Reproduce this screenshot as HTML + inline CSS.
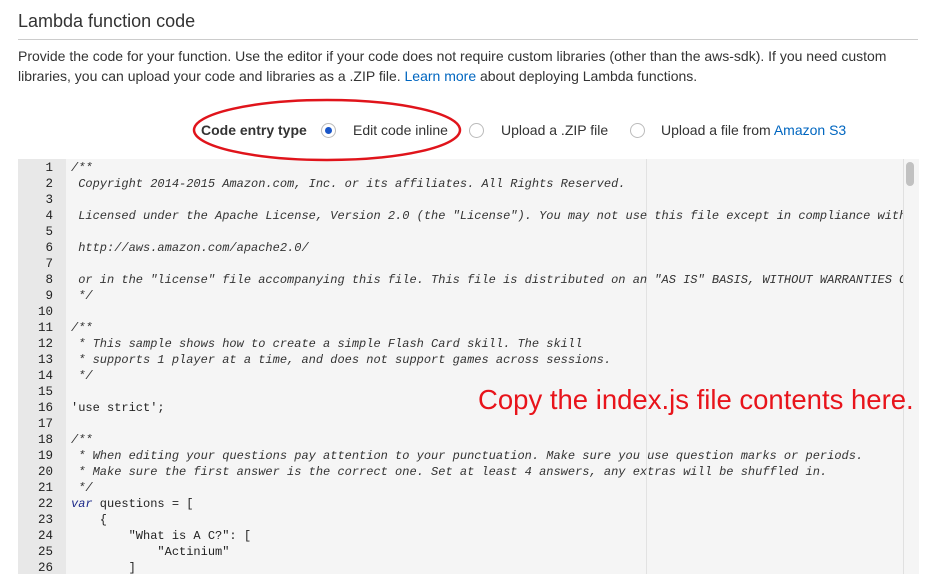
<!DOCTYPE html>
<html><head><style>
body{margin:0;width:937px;height:574px;overflow:hidden;background:#fff;font-family:"Liberation Sans",sans-serif;color:#333;position:relative}
.h{position:absolute;left:18px;top:11px;font-size:18px;color:#333}
.hr{position:absolute;left:18px;top:39px;width:900px;height:1px;background:#ccc}
.p{position:absolute;left:18px;top:47px;width:905px;font-size:14px;line-height:19.5px;color:#333}
a{color:#0066c0;text-decoration:none}
.row{position:absolute;top:122px;font-size:14px;white-space:nowrap}
.rad{position:absolute;top:123px;width:15px;height:15px;border:1px solid #bbb;border-radius:50%;box-sizing:border-box;background:#fff}
.rad.on::after{content:"";position:absolute;left:3px;top:3px;width:7px;height:7px;border-radius:50%;background:#1a56c8}
.ed{position:absolute;left:18px;top:159px;width:885px;height:415px;background:#f5f5f5;overflow:hidden}
.gut{position:absolute;left:0;top:0;width:48px;height:415px;background:#e8e8e8}
.ln,.code{position:absolute;top:1px;font-family:"Liberation Mono",monospace;font-size:12px;line-height:16px;white-space:pre}
.ln{left:0;width:35px;text-align:right;color:#222;font-size:12.5px}
.code{left:53px;color:#333;font-style:italic}
.code .n{font-style:normal;color:#222}
.code .k{color:#1d2a8a}
.pm{position:absolute;left:628px;top:0;width:1px;height:415px;background:#e2e2e2}
.sb{position:absolute;left:903px;top:159px;width:15px;height:415px;background:#f5f5f5;border-left:1px solid #e0e0e0}
.th{position:absolute;left:906px;top:162px;width:8px;height:24px;border-radius:4px;background:#c1c1c1}
.red{position:absolute;left:478px;top:384px;font-size:27.5px;line-height:32px;color:#e8141b;white-space:nowrap}
</style></head><body>
<div class="h">Lambda function code</div>
<div class="hr"></div>
<div class="p">Provide the code for your function. Use the editor if your code does not require custom libraries (other than the aws-sdk). If you need custom libraries, you can upload your code and libraries as a .ZIP file. <a>Learn more</a> about deploying Lambda functions.</div>
<div class="row" style="left:201px;font-weight:bold">Code entry type</div>
<div class="rad on" style="left:321px"></div>
<div class="row" style="left:353px">Edit code inline</div>
<div class="rad" style="left:469px"></div>
<div class="row" style="left:501px">Upload a .ZIP file</div>
<div class="rad" style="left:630px"></div>
<div class="row" style="left:661px">Upload a file from <a>Amazon S3</a></div>
<div class="ed"><div class="gut"></div><div class="pm"></div>
<div class="ln">1
2
3
4
5
6
7
8
9
10
11
12
13
14
15
16
17
18
19
20
21
22
23
24
25
26</div>
<div class="code">/**
 Copyright 2014-2015 Amazon.com, Inc. or its affiliates. All Rights Reserved.

 Licensed under the Apache License, Version 2.0 (the "License"). You may not use this file except in compliance with the License.

 http://aws.amazon.com/apache2.0/

 or in the "license" file accompanying this file. This file is distributed on an "AS IS" BASIS, WITHOUT WARRANTIES OR CONDITIONS
 */

/**
 * This sample shows how to create a simple Flash Card skill. The skill
 * supports 1 player at a time, and does not support games across sessions.
 */

<span class="n">'use strict';</span>

/**
 * When editing your questions pay attention to your punctuation. Make sure you use question marks or periods.
 * Make sure the first answer is the correct one. Set at least 4 answers, any extras will be shuffled in.
 */
<span class="k">var</span><span class="n"> questions = [</span>
<span class="n">    {</span>
<span class="n">        "What is A C?": [</span>
<span class="n">            "Actinium"</span>
<span class="n">        ]</span></div>
</div>
<div class="sb"></div><div class="th"></div>
<div class="red">Copy the index.js file contents here.</div>
<svg style="position:absolute;left:0;top:0" width="937" height="574"><ellipse cx="327" cy="130" rx="133" ry="30" fill="none" stroke="#e0141b" stroke-width="2.5"/></svg>
</body></html>
